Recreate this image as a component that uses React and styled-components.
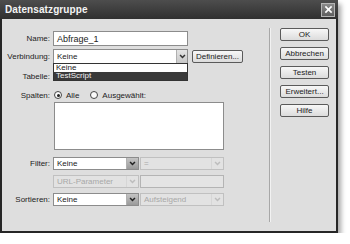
import React from 'react';
import styled, {createGlobalStyle} from 'styled-components';

const GlobalStyle = createGlobalStyle`
    html, body {
        margin: 0;
        padding: 0;
        background: #ffffff;
    }
    body {
        font-family: 'Liberation Sans', Arial, sans-serif;
        font-size: 8px;
        color: #222;
    }
`

const Window = styled.div`
    box-sizing: border-box;
    width: 338px;
    height: 233px;
    border: 2px solid #262626;
    border-top: none;
    background: #dedede;
    box-shadow: 3px 4px 5px rgba(0, 0, 0, 0.35);
    display: flex;
    flex-direction: column;
`

const TitleBar = styled.div`
    height: 19px;
    margin: 0 -2px;
    padding: 0 2px 0 5px;
    display: flex;
    align-items: center;
    justify-content: space-between;
    background: linear-gradient(#4d4d4d, #303030);
    color: #f4f4f4;
    font-weight: bold;
    font-size: 10px;
    letter-spacing: 0.1px;
`

const CloseButton = styled.div`
    box-sizing: border-box;
    width: 14px;
    height: 14px;
    margin-right: 1px;
    border: 1px solid #b5b5b5;
    background: linear-gradient(#8a8a8a, #5e5e5e);
    display: flex;
    align-items: center;
    justify-content: center;
`

const Body = styled.div`
    flex: 1;
    display: flex;
`

const FormPanel = styled.div`
    width: 265px;
    padding-top: 12px;
    display: flex;
    flex-direction: column;
`

const Row = styled.div`
    display: flex;
    align-items: center;
    height: ${p => p.h || 15}px;
    margin-top: ${p => p.mt || 0}px;
    position: relative;
`

const Label = styled.div`
    width: 48px;
    margin-right: 3px;
    text-align: right;
    white-space: nowrap;
`

const TextInput = styled.div`
    box-sizing: border-box;
    width: ${p => p.w}px;
    height: ${p => p.h || 15}px;
    border: 1px solid ${p => p.disabled ? '#b4b4b4' : '#8c8c8c'};
    background: ${p => p.disabled ? '#e4e4e4' : '#fff'};
    padding-left: 3px;
    display: flex;
    align-items: center;
    font-size: ${p => p.big ? 9 : 8}px;
`

const Select = styled.div`
    box-sizing: border-box;
    position: relative;
    width: ${p => p.w}px;
    height: ${p => p.h || 13}px;
    margin-right: ${p => p.mr || 0}px;
    border: 1px solid ${p => p.disabled ? '#c0c0c0' : '#8c8c8c'};
    background: ${p => p.disabled ? '#e2e2e2' : '#fff'};
    color: ${p => p.disabled ? '#a8a8a8' : '#222'};
    display: flex;
    align-items: center;
    padding-left: 3px;
`

const SelectText = styled.span`
    flex: 1;
    white-space: nowrap;
`

const Arrow = styled.div`
    width: ${p => p.w || 11}px;
    align-self: stretch;
    display: flex;
    align-items: center;
    justify-content: center;
    background: ${p => p.dark ? 'linear-gradient(#c4c4c4, #9a9a9a)' : p.disabled ? '#e2e2e2' : 'linear-gradient(#e4e4e4, #c8c8c8)'};
    border-left: 1px solid ${p => p.disabled ? '#d6d6d6' : '#b0b0b0'};
`

const DropList = styled.div`
    box-sizing: border-box;
    position: absolute;
    top: 100%;
    left: -1px;
    width: 135px;
    border: 1px solid #333;
    background: #fff;
    z-index: 2;
`

const DropItem = styled.div`
    height: 8px;
    line-height: 8px;
    padding-left: 2px;
    font-size: 8px;
    background: ${p => p.active ? '#3a3a3a' : '#fff'};
    color: ${p => p.active ? '#f2f2f2' : '#222'};
`

const Button = styled.div`
    box-sizing: border-box;
    width: ${p => p.w || 49}px;
    height: ${p => p.h || 13}px;
    margin-left: ${p => p.ml || 0}px;
    border: 1px solid #5a5a5a;
    border-radius: 2px;
    background: linear-gradient(#f7f7f7, #dcdcdc);
    display: flex;
    align-items: center;
    justify-content: center;
    white-space: nowrap;
    font-size: 8px;
`

const Radio = styled.span`
    box-sizing: border-box;
    width: 8px;
    height: 8px;
    border: 1px solid #444;
    border-radius: 50%;
    background: #fafafa;
    display: inline-flex;
    align-items: center;
    justify-content: center;
    margin: 0 4px 0 ${p => p.ml || 0}px;

    &::after {
        content: '';
        display: ${p => p.checked ? 'block' : 'none'};
        width: 3px;
        height: 3px;
        border-radius: 50%;
        background: #222;
    }
`

const ListBox = styled.div`
    box-sizing: border-box;
    width: 170px;
    height: 48px;
    margin: 1px 0 0 52px;
    border: 1px solid #8c8c8c;
    background: #fff;
`

const Separator = styled.div`
    width: 1px;
    height: 194px;
    margin: 9px 0 0 2px;
    background: #a8a8a8;
    border-right: 1px solid #f2f2f2;
`

const ButtonColumn = styled.div`
    display: flex;
    flex-direction: column;
    gap: 6px;
    padding-top: 9px;
    margin-left: 9px;
`

const Chevron = ({color = '#333', size = 7}) => (
    <svg width={size} height={size * 0.7} viewBox="0 0 10 7">
        <path d="M1.5 1.5 L5 5 L8.5 1.5" fill="none" stroke={color} strokeWidth="2.2" />
    </svg>
)

const App = () => {
    return (
        <>
            <GlobalStyle />
            <Window>
                <TitleBar>
                    <span>Datensatzgruppe</span>
                    <CloseButton>
                        <svg width="9" height="9" viewBox="0 0 10 10">
                            <path d="M1.5 1.5 L8.5 8.5 M8.5 1.5 L1.5 8.5" stroke="#fff" strokeWidth="1.8" />
                        </svg>
                    </CloseButton>
                </TitleBar>
                <Body>
                    <FormPanel>
                        <Row>
                            <Label>Name:</Label>
                            <TextInput w={135} big>Abfrage_1</TextInput>
                        </Row>
                        <Row mt={3}>
                            <Label>Verbindung:</Label>
                            <Select w={135} h={15} mr={4}>
                                <SelectText>Keine</SelectText>
                                <Arrow w={10}><Chevron /></Arrow>
                                <DropList>
                                    <DropItem>Keine</DropItem>
                                    <DropItem active>TestScript</DropItem>
                                </DropList>
                            </Select>
                            <Button w={51} h={13}>Definieren...</Button>
                        </Row>
                        <Row mt={5}>
                            <Label>Tabelle:</Label>
                        </Row>
                        <Row mt={5} h={12}>
                            <Label>Spalten:</Label>
                            <Radio checked ml={1} />
                            <span>Alle</span>
                            <Radio ml={11} />
                            <span>Ausgewählt:</span>
                        </Row>
                        <ListBox />
                        <Row mt={7} h={13}>
                            <Label>Filter:</Label>
                            <Select w={86} mr={1}>
                                <SelectText>Keine</SelectText>
                                <Arrow dark><Chevron color="#222" /></Arrow>
                            </Select>
                            <Select w={84} disabled>
                                <SelectText>=</SelectText>
                                <Arrow disabled><Chevron color="#bdbdbd" /></Arrow>
                            </Select>
                        </Row>
                        <Row mt={5} h={13}>
                            <Label />
                            <Select w={86} mr={1} disabled>
                                <SelectText>URL-Parameter</SelectText>
                                <Arrow disabled><Chevron color="#bdbdbd" /></Arrow>
                            </Select>
                            <TextInput w={84} h={13} disabled />
                        </Row>
                        <Row mt={5} h={13}>
                            <Label>Sortieren:</Label>
                            <Select w={86} mr={1}>
                                <SelectText>Keine</SelectText>
                                <Arrow dark><Chevron color="#222" /></Arrow>
                            </Select>
                            <Select w={84} disabled>
                                <SelectText>Aufsteigend</SelectText>
                                <Arrow disabled><Chevron color="#bdbdbd" /></Arrow>
                            </Select>
                        </Row>
                    </FormPanel>
                    <Separator />
                    <ButtonColumn>
                        <Button>OK</Button>
                        <Button>Abbrechen</Button>
                        <Button>Testen</Button>
                        <Button>Erweitert...</Button>
                        <Button>Hilfe</Button>
                    </ButtonColumn>
                </Body>
            </Window>
        </>
    );
}

export default App;
